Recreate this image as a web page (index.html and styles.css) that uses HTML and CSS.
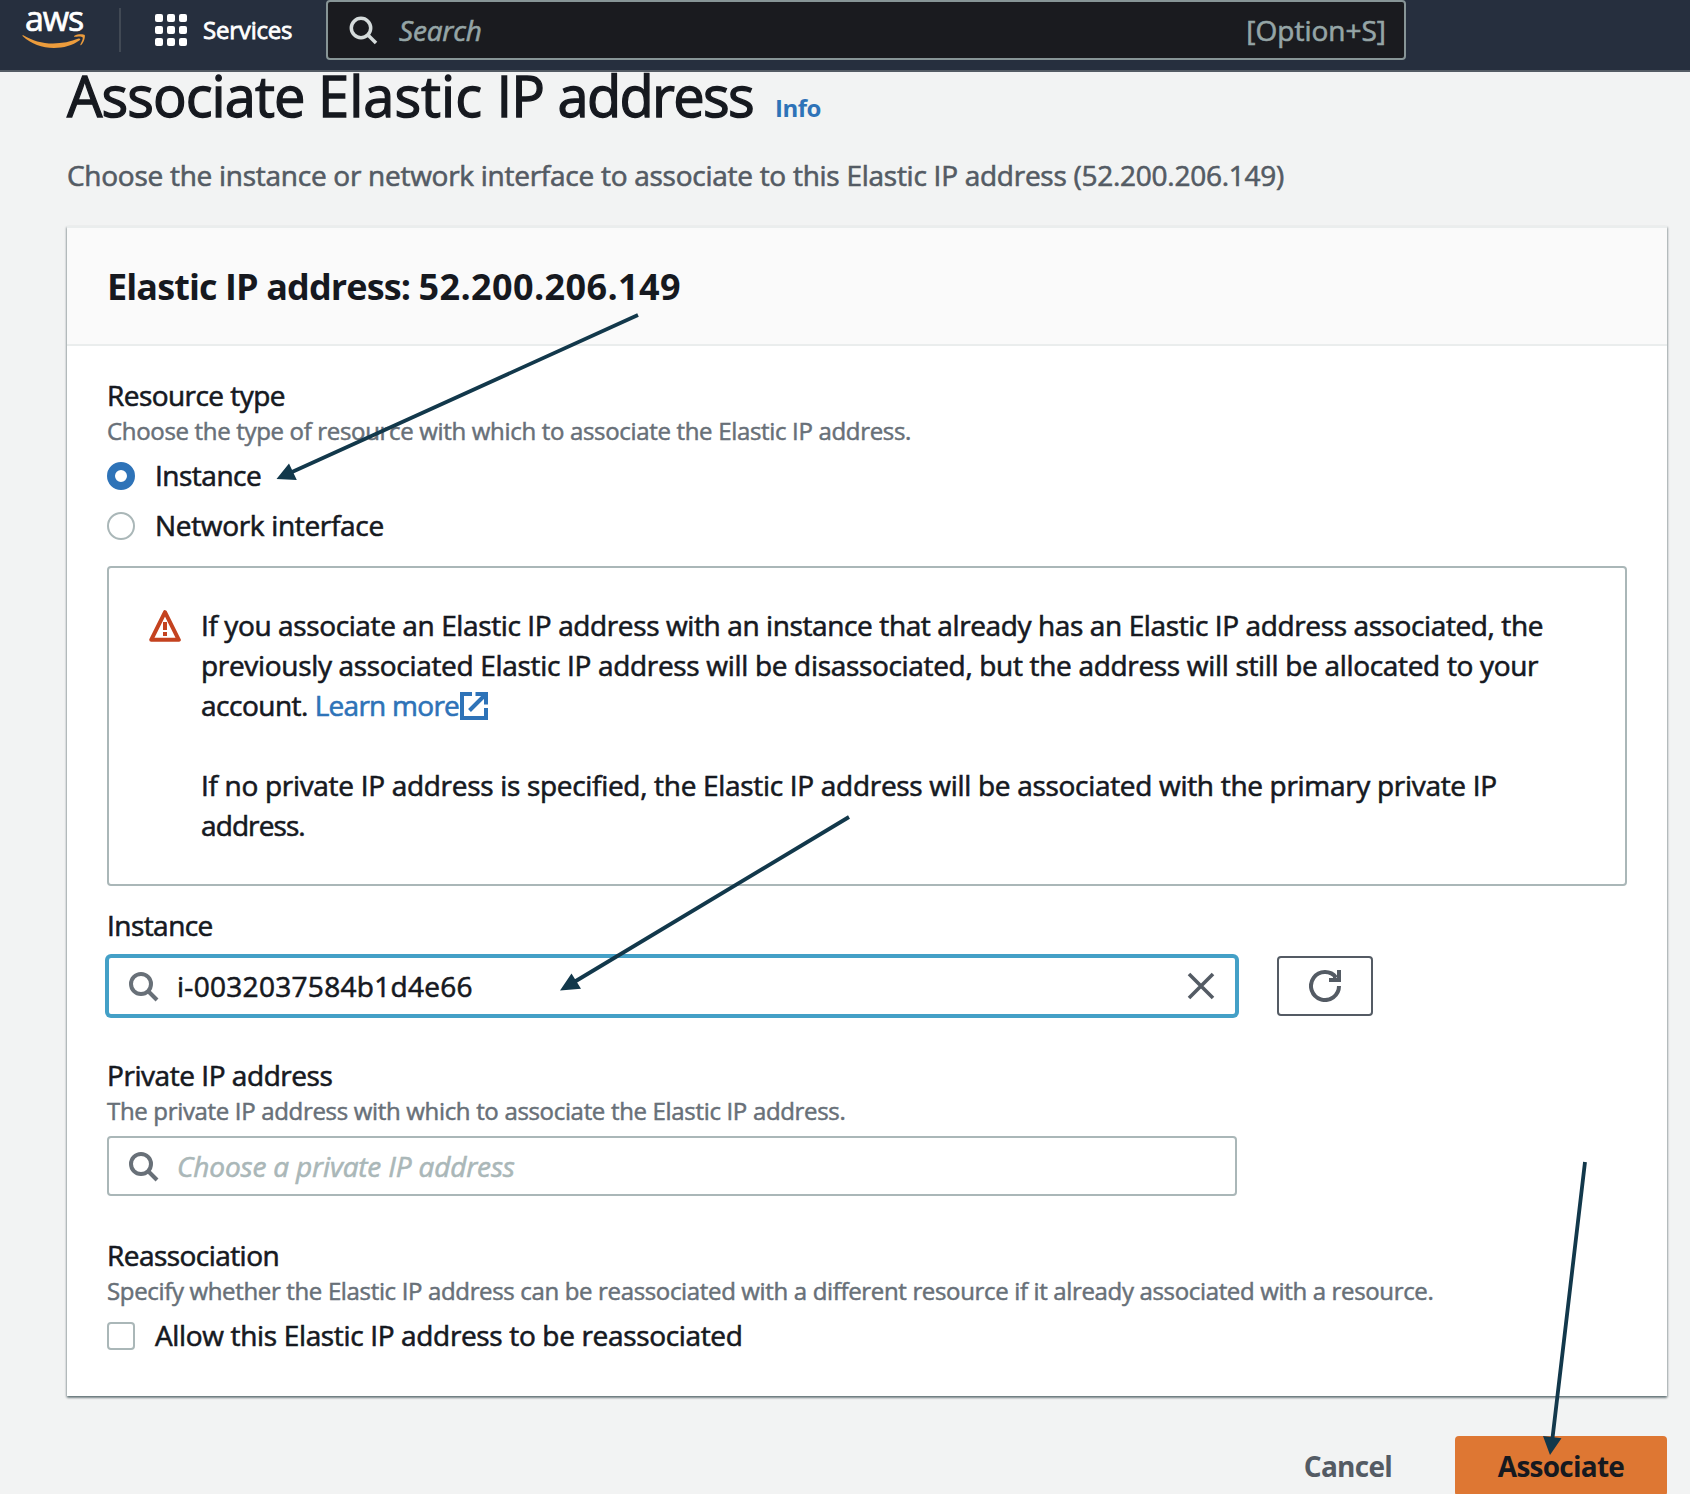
FILE: index.html
```html
<!DOCTYPE html>
<html lang="en">
<head>
<meta charset="utf-8">
<title>Associate Elastic IP address</title>
<link rel="stylesheet" href="styles.css">
</head>
<body>
<header class="nav">
  <div class="logo">
    <span class="logo-text">aws</span>
    <svg class="logo-smile" viewBox="0 0 66 16" width="66" height="16"><path d="M.8 1.2C0 .5.5-.3 1.700.4 10 5.300 20 8.500 31 8.500 40 8.500 49 6.800 56.500 3.600 58 3 59 4.400 57.700 5.300 50.500 10.500 41.500 13 32 13 20 13 9 8.600.8 1.200Z"/><path d="M60.500 2.200C59.500.9 55 1.500 52.700 1.800 51.900 1.900 51.800 1.200 52.500.8 56-1.600 62-.9 62.700 0 63.400.9 62.500 7 59.200 10 58.600 10.500 58.100 10.200 58.400 9.500 59.200 7.700 61.500 3.500 60.500 2.200Z"/></svg>
  </div>
  <div class="divider"></div>
  <div class="services">
    <span class="grid-icon"><i></i><i></i><i></i><i></i><i></i><i></i><i></i><i></i><i></i></span>
    <span class="services-label">Services</span>
  </div>
  <div class="nav-search">
    <svg class="nav-search-icon" viewBox="0 0 32 32" width="32" height="32"><circle cx="13" cy="13" r="9.700"/><path d="M19.700 19.700 28 28"/></svg>
    <span class="nav-placeholder">Search</span>
    <span class="shortcut">[Option+S]</span>
  </div>
</header>
<main class="page">
  <div class="title-row"><h1>Associate <span class="title-loose">Elastic </span>IP <span class="title-tight">address</span></h1><a class="info">Info</a></div>
  <p class="subtitle">Choose the instance or network interface to associate to this Elastic IP address (52.200.206.149)</p>

  <section class="panel">
    <div class="panel-head"><h2>Elastic IP address: <span class="ip">52.200.206.149</span></h2></div>
    <div class="panel-body">
      <div class="label resource-label">Resource type</div>
      <div class="hint resource-hint">Choose the type of resource with which to associate the Elastic IP address.</div>
      <div class="choices">
        <div class="choice"><span class="radio on"></span><span class="instance-text">Instance</span></div>
        <div class="choice"><span class="radio"></span><span class="network-text">Network interface</span></div>
      </div>

      <div class="alert">
        <svg class="warn" viewBox="0 0 32 32" width="32" height="32"><path class="tri" d="M16 2.200 29.800 29.800H2.200Z"/><path class="mark" d="M14 12h4v8h-4zM14 22h4v4h-4z"/></svg>
        <div class="alert-text">
          <p><span class="l1">If you associate an Elastic IP address with an instance that already has an Elastic IP address associated, the</span><br><span class="l2">previously associated Elastic IP address will be disassociated, but the address will still be allocated to your</span><br><span class="l3">account. <a class="link">Learn more</a></span><svg class="ext" viewBox="0 0 28 28" width="28" height="28"><path d="M12 2H2v24h24V16"/><path d="M15.500 2H26v10.500M9.500 18.500 25.500 2.500"/></svg></p>
          <p><span class="l4">If no private IP address is specified, the Elastic IP address will be associated with the primary private IP</span><br><span class="l5">address.</span></p>
        </div>
      </div>

      <div class="label instance-label">Instance</div>
      <div class="field-row">
        <div class="input focused">
          <svg class="mag" viewBox="0 0 32 32" width="32" height="32"><circle cx="14" cy="14" r="10"/><path d="M21 21 30 30"/></svg>
          <span class="value">i-0032037584b1d4e66</span>
          <svg class="clear" viewBox="0 0 28 28" width="28" height="28"><path d="M2 2 26 26M26 2 2 26"/></svg>
        </div>
        <div class="refresh"><svg viewBox="0 0 32 32" width="32" height="32"><path d="M30 16A14 14 0 1 1 27.200 7.600"/><path class="corner" d="M28 0h4v12H20V8h8z"/><path class="corner" d="M24 5 29 10H24z"/></svg></div>
      </div>

      <div class="label private-label">Private IP address</div>
      <div class="hint private-hint">The private IP address with which to associate the Elastic IP address.</div>
      <div class="input private-input">
        <svg class="mag" viewBox="0 0 32 32" width="32" height="32"><circle cx="14" cy="14" r="10"/><path d="M21 21 30 30"/></svg>
        <span class="placeholder">Choose a private IP address</span>
      </div>

      <div class="label re-label">Reassociation</div>
      <div class="hint re-hint">Specify whether the Elastic IP address can be reassociated with a different resource if it already associated with a resource.</div>
      <div class="choice allow"><span class="checkbox"></span><span class="allow-text">Allow this Elastic IP address to be reassociated</span></div>
    </div>
  </section>

  <div class="actions"><span class="cancel">Cancel</span><span class="primary">Associate</span></div>
</main>
<svg class="arrows" viewBox="0 0 1690 1494" width="1690" height="1494">
  <path class="shaft" d="M638 315 292 472M849 817 575 981.500M1585 1162 1552.500 1438"/>
  <path class="tip" d="M276.500 479 289 463.500 296.800 480ZM560 990.500 571.500 973.500 581 988.800ZM1550 1455 1543 1436 1561.500 1438.300Z"/>
</svg>
</body>
</html>
```
FILE: styles.css
```css
* { box-sizing: border-box; }

body {
  margin: 0;
  height: 1494px;
  overflow: hidden;
  position: relative;
  background: #f2f3f3;
  color: #16191f;
  font: 400 28px/40px "Open Sans", "Noto Sans", sans-serif;
  -webkit-text-stroke: 0.6px currentColor;
}

h1, h2, p { margin: 0; font-weight: 400; }
svg { display: block; flex: none; fill: none; }
span { white-space: nowrap; }

/* Navigation bar */
.nav {
  display: flex;
  align-items: flex-start;
  height: 72px;
  padding-left: 22px;
  background: #262f3e;
  border-bottom: 2px solid #545b64;
  color: #fff;
}
.logo { width: 66px; padding-top: 1px; }
.logo-text {
  display: block;
  height: 34px;
  padding-left: 3px;
  font-size: 34px;
  line-height: 34px;
  letter-spacing: -1.1px;
  -webkit-text-stroke: 0.7px #fff;
}
.logo-smile { fill: #ec9c3c; overflow: visible; }
.divider { width: 2px; height: 44px; margin: 8px 34px 0 31px; background: #414954; }
.services { display: flex; gap: 16px; width: 171px; }
.grid-icon {
  display: grid;
  grid-template-columns: repeat(3, 8px);
  gap: 4px;
  margin-top: 14px;
  height: 32px;
}
.grid-icon i { height: 8px; border-radius: 2px; background: #fff; }
.services-label { padding-top: 10px; font-size: 24px; letter-spacing: -0.2px; -webkit-text-stroke: 0.8px #fff; }
.nav-search {
  display: flex;
  align-items: center;
  width: 1080px;
  height: 60px;
  padding: 0 18px 0 20px;
  border: 2px solid #879596;
  border-radius: 4px;
  background: #1a1b1f;
  color: #95a5a6;
}
.nav-search-icon { margin-top: 2px; stroke: #d5dbdb; stroke-width: 3.5; }
.nav-placeholder { flex: 1; margin-left: 19px; font-style: italic; letter-spacing: -0.2px; }

/* Page heading */
.page { padding: 0 23px 0 67px; }
.title-row { display: flex; align-items: baseline; height: 44px; }
h1 { font-size: 56px; line-height: 46px; letter-spacing: -0.95px; -webkit-text-stroke-width: 1.3px; white-space: nowrap; }
.title-loose { letter-spacing: 0; }
.title-tight { letter-spacing: -1.7px; }
.info { margin-left: 22px; font-size: 24px; font-weight: 700; line-height: 32px; letter-spacing: -0.5px; color: #2e73b8; -webkit-text-stroke-width: 0; }
.subtitle { margin-top: 39px; color: #545b64; letter-spacing: -0.267px; white-space: nowrap; }

/* Panel */
.panel {
  margin-top: 31px;
  height: 1170px;
  background: #fff;
  border-top: 2px solid #eaeded;
  box-shadow: 0 2px 2px 0 rgba(0, 28, 36, 0.4), 1px 1px 2px 0 rgba(0, 28, 36, 0.2), -1px 1px 2px 0 rgba(0, 28, 36, 0.2);
}
.panel-head { height: 118px; padding: 37px 40px 0; background: #fafafa; border-bottom: 2px solid #eaeded; }
h2 { font-size: 36px; font-weight: 700; line-height: 44px; letter-spacing: -0.9px; -webkit-text-stroke-width: 0; white-space: nowrap; }
.ip { letter-spacing: 0.38px; }
.panel-body { padding: 29px 40px 0; }
.label { letter-spacing: -0.55px; }
.hint { font-size: 24px; line-height: 32px; letter-spacing: -0.327px; color: #687078; white-space: nowrap; -webkit-text-stroke-width: 0.5px; }
.re-hint { letter-spacing: -0.345px; }

.choices { display: flex; flex-direction: column; gap: 10px; margin-top: 8px; }
.choice { display: flex; gap: 20px; height: 40px; letter-spacing: -0.5px; }
.network-text { letter-spacing: -0.32px; }
.radio, .checkbox { flex: none; width: 28px; height: 28px; margin-top: 7px; border: 2px solid #aab7b8; background: #fff; }
.radio { border-radius: 50%; }
.radio.on { border: 8px solid #2e73b8; }
.checkbox { border-radius: 4px; }
.allow { margin-top: 8px; }
.allow-text { letter-spacing: -0.345px; }

.alert {
  display: flex;
  gap: 20px;
  height: 320px;
  margin-top: 21px;
  padding: 37px 40px 0;
  border: 2px solid #aab7b8;
  border-radius: 4px;
}
.warn { margin-top: 5px; }
.tri { stroke: #c4421f; stroke-width: 4; stroke-linejoin: round; }
.mark { fill: #c4421f; }
.alert-text { flex: 1; letter-spacing: -0.387px; }
.alert-text p + p { margin-top: 40px; }
.l2 { letter-spacing: -0.32px; }
.l3 { letter-spacing: -0.5px; }
.l4 { letter-spacing: -0.307px; }
.l5 { letter-spacing: -0.9px; }
.link { color: #2e73b8; letter-spacing: -0.73px; }
.ext { display: inline-block; vertical-align: -4px; margin-left: 1px; stroke: #2e73b8; stroke-width: 4; }

/* Fields */
.instance-label { margin-top: 19px; }
.field-row { display: flex; gap: 40px; margin-top: 11px; }
.input {
  display: flex;
  align-items: center;
  width: 1130px;
  height: 60px;
  padding: 0 20px 0 18px;
  border: 2px solid #aab7b8;
  border-radius: 4px;
  background: #fff;
}
.focused { border-color: #44a0c7; box-shadow: 0 0 0 2px #44a0c7; }
.mag { margin-right: 18px; stroke: #687078; stroke-width: 4; }
.value { flex: 1; letter-spacing: 0.3px; }
.placeholder { font-style: italic; letter-spacing: -0.16px; color: #aab7b8; }
.clear { stroke: #545b64; stroke-width: 3.6; }
.refresh { display: flex; align-items: center; justify-content: center; width: 96px; height: 60px; border: 2px solid #545b64; border-radius: 4px; }
.refresh svg { stroke: #545b64; stroke-width: 4; }
.refresh .corner { fill: #545b64; stroke: none; }
.private-label, .re-label { margin-top: 39px; }
.private-label { letter-spacing: -0.45px; }
.private-input { margin-top: 9px; }

/* Actions */
.actions { display: flex; justify-content: flex-end; align-items: center; gap: 63px; margin-top: 40px; height: 60px; font-weight: 700; letter-spacing: -0.75px; -webkit-text-stroke-width: 0; }
.cancel { color: #545b64; }
.primary { width: 212px; height: 60px; border-radius: 4px; background: #de7733; line-height: 60px; text-align: center; }

/* Annotation arrows */
.arrows { position: absolute; left: 0; top: 0; }
.shaft { stroke: #12384b; stroke-width: 3.8; }
.tip { fill: #12384b; }
```
